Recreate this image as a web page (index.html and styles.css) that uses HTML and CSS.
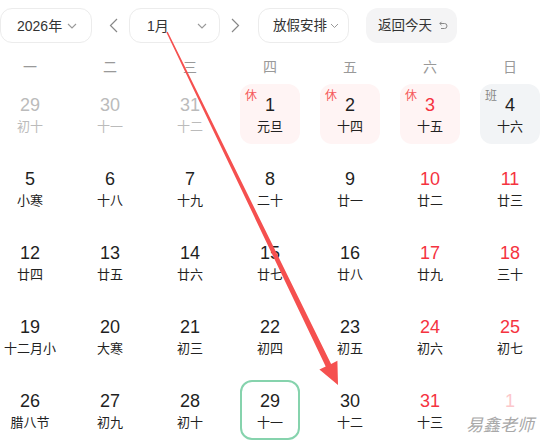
FILE: index.html
```html
<!DOCTYPE html>
<html lang="zh-CN">
<head>
<meta charset="utf-8">
<title>日历</title>
<link rel="stylesheet" href="styles.css">
</head>
<body>
<div class="page">
  <div class="toolbar">
    <div class="select sel-year"><span class="sel-text">2026年</span><svg class="chev" width="10" height="6" viewBox="0 0 10 6"><path d="M1 1 L5 5 L9 1" fill="none" stroke="#999" stroke-width="1.1"/></svg></div>
    <span class="nav nav-prev"><svg width="9" height="15" viewBox="0 0 9 15"><path d="M8 1 L1.5 7.5 L8 14" fill="none" stroke="#888" stroke-width="1.2"/></svg></span>
    <div class="select sel-month"><span class="sel-text">1月</span><svg class="chev" width="10" height="6" viewBox="0 0 10 6"><path d="M1 1 L5 5 L9 1" fill="none" stroke="#999" stroke-width="1.1"/></svg></div>
    <span class="nav nav-next"><svg width="9" height="15" viewBox="0 0 9 15"><path d="M1 1 L7.5 7.5 L1 14" fill="none" stroke="#888" stroke-width="1.2"/></svg></span>
    <div class="select sel-holiday"><span class="sel-text narrow">放假安排</span><svg class="chev-s" width="9" height="6" viewBox="0 0 9 6"><path d="M1 1 L4.5 4.5 L8 1" fill="none" stroke="#999" stroke-width="1"/></svg></div>
    <div class="today-btn"><span class="sel-text narrow">返回今天</span><svg class="undo" width="9" height="9" viewBox="0 0 9 9"><path d="M2.5 0.8 L0.8 2.5 L2.5 4.2 M0.8 2.5 H5.5 A2.5 2.5 0 0 1 5.5 7.5 H2" fill="none" stroke="#888" stroke-width="1"/></svg></div>
  </div>

  <div class="weekdays">
    <span>一</span><span>二</span><span>三</span><span>四</span><span>五</span><span>六</span><span>日</span>
  </div>

  <div class="grid">
    <div class="cell other"><span class="num">29</span><span class="lunar">初十</span></div>
    <div class="cell other"><span class="num">30</span><span class="lunar">十一</span></div>
    <div class="cell other"><span class="num">31</span><span class="lunar">十二</span></div>
    <div class="cell rest"><span class="tag">休</span><span class="num">1</span><span class="lunar">元旦</span></div>
    <div class="cell rest"><span class="tag">休</span><span class="num">2</span><span class="lunar">十四</span></div>
    <div class="cell rest weekend"><span class="tag">休</span><span class="num">3</span><span class="lunar">十五</span></div>
    <div class="cell work"><span class="tag">班</span><span class="num">4</span><span class="lunar">十六</span></div>

    <div class="cell"><span class="num">5</span><span class="lunar">小寒</span></div>
    <div class="cell"><span class="num">6</span><span class="lunar">十八</span></div>
    <div class="cell"><span class="num">7</span><span class="lunar">十九</span></div>
    <div class="cell"><span class="num">8</span><span class="lunar">二十</span></div>
    <div class="cell"><span class="num">9</span><span class="lunar">廿一</span></div>
    <div class="cell weekend"><span class="num">10</span><span class="lunar">廿二</span></div>
    <div class="cell weekend"><span class="num">11</span><span class="lunar">廿三</span></div>

    <div class="cell"><span class="num">12</span><span class="lunar">廿四</span></div>
    <div class="cell"><span class="num">13</span><span class="lunar">廿五</span></div>
    <div class="cell"><span class="num">14</span><span class="lunar">廿六</span></div>
    <div class="cell"><span class="num">15</span><span class="lunar">廿七</span></div>
    <div class="cell"><span class="num">16</span><span class="lunar">廿八</span></div>
    <div class="cell weekend"><span class="num">17</span><span class="lunar">廿九</span></div>
    <div class="cell weekend"><span class="num">18</span><span class="lunar">三十</span></div>

    <div class="cell"><span class="num">19</span><span class="lunar">十二月小</span></div>
    <div class="cell"><span class="num">20</span><span class="lunar">大寒</span></div>
    <div class="cell"><span class="num">21</span><span class="lunar">初三</span></div>
    <div class="cell"><span class="num">22</span><span class="lunar">初四</span></div>
    <div class="cell"><span class="num">23</span><span class="lunar">初五</span></div>
    <div class="cell weekend"><span class="num">24</span><span class="lunar">初六</span></div>
    <div class="cell weekend"><span class="num">25</span><span class="lunar">初七</span></div>

    <div class="cell"><span class="num">26</span><span class="lunar">腊八节</span></div>
    <div class="cell"><span class="num">27</span><span class="lunar">初九</span></div>
    <div class="cell"><span class="num">28</span><span class="lunar">初十</span></div>
    <div class="cell today"><span class="num">29</span><span class="lunar">十一</span></div>
    <div class="cell"><span class="num">30</span><span class="lunar">十二</span></div>
    <div class="cell weekend"><span class="num">31</span><span class="lunar">十三</span></div>
    <div class="cell next"><span class="num">1</span></div>
  </div>

  <svg class="arrow" width="542" height="444" viewBox="0 0 542 444">
    <polygon points="167.7,31.7 166.3,32.3 325.7,366.5 319.4,369.6 338,385 337.4,360.8 331.1,363.9" fill="#f5504f"/>
  </svg>

  <div class="watermark">易鑫老师</div>
</div>
</body>
</html>
```

FILE: styles.css
```css
* { box-sizing: border-box; }

html, body {
  margin: 0;
  padding: 0;
  background: #fff;
}

body {
  font-family: "Liberation Sans", "Noto Sans CJK SC", Arial, sans-serif;
  color: #222;
  width: 542px;
  height: 444px;
  overflow: hidden;
}

.page {
  position: relative;
  width: 542px;
  height: 444px;
}

.toolbar {
  display: flex;
  align-items: center;
  padding-top: 8px;
  height: 43px;
}

.select {
  display: flex;
  align-items: center;
  justify-content: space-between;
  height: 35px;
  border: 1px solid #ececec;
  border-radius: 12px;
  background: #fff;
}

.sel-text {
  font-size: 14px;
  color: #333;
  line-height: 20px;
}

.sel-text.narrow {
  font-size: 13.5px;
}

.sel-year {
  width: 92px;
  padding: 0 14px 0 16px;
}

.sel-month {
  width: 91px;
  padding: 0 12px 0 17px;
}

.sel-holiday {
  width: 91px;
  justify-content: flex-start;
  gap: 3px;
  padding: 0 0 0 14px;
}

.chev, .chev-s { display: block; }

.nav {
  display: flex;
  align-items: center;
  justify-content: center;
  height: 35px;
}

.nav svg { display: block; }

.nav-prev {
  width: 37px;
  padding-left: 6px;
}

.nav-next {
  width: 38px;
  padding-right: 8px;
}

.today-btn {
  display: flex;
  align-items: center;
  gap: 7px;
  height: 35px;
  width: 91px;
  margin-left: 17px;
  padding-left: 12px;
  border-radius: 12px;
  background: #f4f4f5;
}

.undo { display: block; }

.weekdays {
  display: grid;
  grid-template-columns: repeat(7, 60px);
  column-gap: 20px;
  margin-top: 8px;
  height: 30px;
  line-height: 30px;
  font-size: 14px;
  color: #999;
  text-align: center;
  font-family: "Noto Sans CJK SC", sans-serif;
}

.grid {
  display: grid;
  grid-template-columns: repeat(7, 60px);
  grid-auto-rows: 60px;
  column-gap: 20px;
  row-gap: 14px;
  margin-top: 3px;
}

.cell {
  position: relative;
  display: flex;
  flex-direction: column;
  align-items: center;
  padding-top: 10px;
  border-radius: 12px;
}

.num {
  font-size: 18px;
  line-height: 22px;
  color: #1f1f1f;
}

.lunar {
  font-size: 13px;
  line-height: 17px;
  margin-top: 1px;
  color: #222;
  font-family: "Noto Sans CJK SC", sans-serif;
  white-space: nowrap;
}

.weekend .num { color: #f5333f; }

.other .num, .other .lunar { color: #bbb; }

.next .num { color: #fcc7cb; }

.rest { background: #fff4f4; }
.work { background: #f2f4f6; }

.tag {
  position: absolute;
  top: 4px;
  left: 5px;
  font-size: 12px;
  line-height: 14px;
  font-family: "Noto Sans CJK SC", sans-serif;
}

.rest .tag { color: #f55a5a; }
.work .tag { color: #888; }

.today {
  border: 2px solid #86d3ad;
  padding-top: 8px;
}

.arrow {
  position: absolute;
  left: 0;
  top: 0;
  pointer-events: none;
}

.watermark {
  position: absolute;
  right: 8px;
  bottom: 9px;
  font-size: 17px;
  line-height: 22px;
  color: #a8a8a8;
  font-family: "Noto Sans CJK SC", sans-serif;
  font-style: italic;
  text-shadow: 1px 1px 0 #fff, -1px -1px 0 #fff, 1px -1px 0 #fff, -1px 1px 0 #fff;
}
```
